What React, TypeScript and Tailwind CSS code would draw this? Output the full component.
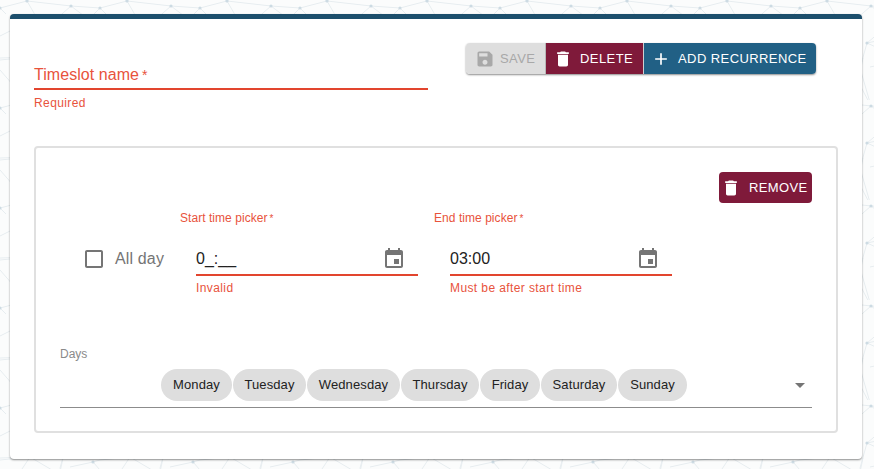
import React from 'react';

const SAVE = 'M17 3H5c-1.11 0-2 .9-2 2v14c0 1.1.89 2 2 2h14c1.1 0 2-.9 2-2V7l-4-4zm-5 16c-1.66 0-3-1.34-3-3s1.34-3 3-3 3 1.34 3 3-1.34 3-3 3zm3-10H5V5h10v4z';
const TRASH = 'M6 19c0 1.1.9 2 2 2h8c1.1 0 2-.9 2-2V7H6v12zM19 4h-3.5l-1-1h-5l-1 1H5v2h14V4z';
const PLUS = 'M19 13h-6v6h-2v-6H5v-2h6V5h2v6h6v2z';
const EVENT = 'M17 12h-5v5h5v-5zM16 1v2H8V1H6v2H5c-1.11 0-1.99.9-1.99 2L3 19c0 1.1.89 2 2 2h14c1.1 0 2-.9 2-2V5c0-1.1-.9-2-2-2h-1V1h-2zm3 18H5V8h14v11z';
const CHECK = 'M19 5v14H5V5h14m0-2H5c-1.1 0-2 .9-2 2v14c0 1.1.9 2 2 2h14c1.1 0 2-.9 2-2V5c0-1.1-.9-2-2-2z';
const ARROW = 'M7 10l5 5 5-5z';

const DAYS = [
  { name: 'Monday', w: 'w-[71px]' },
  { name: 'Tuesday', w: 'w-[73px]' },
  { name: 'Wednesday', w: 'w-[93px]' },
  { name: 'Thursday', w: 'w-[78px]' },
  { name: 'Friday', w: 'w-[60px]' },
  { name: 'Saturday', w: 'w-[76px]' },
  { name: 'Sunday', w: 'w-[69px]' },
];

const Icon = ({ d, className }: { d: string; className: string }) => (
  <svg viewBox="0 0 24 24" className={className} fill="currentColor">
    <path d={d} />
  </svg>
);

// triangle mesh behind the card, repeats every 100px
const Background = () => {
  const lines = [
    [27, 1, 71, 6], [71, 6, 100, 8], [27, 1, 0, 8], [27, 1, 38, 20], [71, 6, 55, 20], [71, 6, 92, 22],
    [27, 101, 38, 120], [0, 8, 6, 14], [100, 8, 94, 14],
    [67, 43, 92, 22], [67, 43, 100, 36], [67, 43, 100, 58], [67, 43, 60, 68],
    [0, 36, 12, 30], [0, 58, 30, 57], [30, 57, 20, 72], [30, 57, 52, 70], [63, 58, 60, 72],
    [70, 67, 93, 62], [93, 62, 100, 60], [0, 60, 30, 57], [93, 62, 100, 70], [0, 70, 27, 101], [52, 70, 71, 106],
    [60, 68, 71, 106],
  ];
  const nodes = [[27, 1], [71, 6], [100, 8], [0, 8], [67, 43], [93, 62]];
  return (
    <svg className="absolute inset-0 h-full w-full" aria-hidden="true">
      <defs>
        <pattern id="mesh" width="100" height="100" patternUnits="userSpaceOnUse">
          {lines.map(([x1, y1, x2, y2], i) => (
            <line key={i} x1={x1} y1={y1} x2={x2} y2={y2} stroke="#e7edf0" strokeWidth="1" />
          ))}
          {nodes.map(([cx, cy], i) => (
            <circle key={i} cx={cx} cy={cy} r="1.6" fill="#cddbe3" />
          ))}
        </pattern>
      </defs>
      <rect width="100%" height="100%" fill="#fbfcfc" />
      <rect width="100%" height="100%" fill="url(#mesh)" />
    </svg>
  );
};

const TimeField = ({ label, value, helper }: { label: string; value: string; helper: string }) => (
  <div className="relative w-[222px]">
    <div className="absolute left-[-16px] top-[-32px] whitespace-nowrap text-[12px] leading-[14px] tracking-[0.05px] text-[#e8533c]">
      {label}
      <span className="ml-[2px] text-[10px]">*</span>
    </div>
    <div className="flex h-[33px] items-center justify-between border-b-2 border-[#e2452e] pr-[12px] pt-[1px]">
      <span className="text-[16px] text-[#222222]">{value}</span>
      <Icon d={EVENT} className="h-6 w-6 text-[#757575]" />
    </div>
    <p className="mt-[5px] text-[12px] leading-[14px] tracking-[0.4px] text-[#e8533c]">{helper}</p>
  </div>
);

const App: React.FC = () => {
  return (
    <div className="relative h-[469px] w-[874px] overflow-hidden font-['Liberation_Sans',sans-serif]">
      <Background />
      <div className="relative pl-[10px] pt-[14px]">
        <div className="h-[445px] w-[852px] rounded-[4px] border-t-[5px] border-[#1c4f6c] bg-white pl-[24px] pr-[24px] shadow-[0_1px_2px_rgba(0,0,0,0.45)]">
          {/* name field and actions */}
          <div className="flex h-[127px] items-start">
            <div className="w-[394px] pt-[42px]">
              <div className="h-[29px] border-b-2 border-[#e2452e] text-[16px] leading-[28px] tracking-[0.05px] text-[#e8533c]">
                Timeslot name<span className="ml-[3px] text-[14px]">*</span>
              </div>
              <p className="mt-[6px] text-[12px] leading-[14px] tracking-[0.4px] text-[#e8533c]">Required</p>
            </div>
            <div className="ml-[38px] mt-[24px] flex h-[31px] rounded-[4px] text-[13px] tracking-[0.42px] shadow-[0_1px_2px_rgba(0,0,0,0.45)]">
              <button className="flex w-[80px] items-center rounded-l-[4px] border-r border-[#b8b8b8] bg-[#dedede] pl-[9px] text-[#a8a8a8]">
                <Icon d={SAVE} className="h-5 w-5" />
                <span className="ml-[5px]">SAVE</span>
              </button>
              <button className="flex w-[98px] items-center border-r border-[#cfcfcf] bg-[#7f1a3a] pl-[7px] text-white">
                <Icon d={TRASH} className="h-5 w-5" />
                <span className="ml-[7px]">DELETE</span>
              </button>
              <button className="flex w-[172px] items-center rounded-r-[4px] bg-[#216085] pl-[7px] text-white">
                <Icon d={PLUS} className="h-5 w-5" />
                <span className="ml-[7px]">ADD RECURRENCE</span>
              </button>
            </div>
          </div>

          {/* recurrence box */}
          <div className="h-[287px] w-[804px] rounded-[4px] border-2 border-[#e0e0e0] px-[24px]">
            <div className="flex justify-end pt-[24px]">
              <button className="flex h-[31px] w-[93px] items-center rounded-[4px] bg-[#7f1a3a] pl-[2px] text-[13px] tracking-[0.35px] text-white">
                <Icon d={TRASH} className="h-5 w-5" />
                <span className="ml-[8px]">REMOVE</span>
              </button>
            </div>
            <div className="mt-[40px] flex items-start">
              <div className="flex h-[32px] w-[136px] items-center pl-[22px]">
                <Icon d={CHECK} className="h-6 w-6 shrink-0 text-[#757575]" />
                <span className="ml-[9px] whitespace-nowrap text-[16px] tracking-[0.15px] text-[#757575]">All day</span>
              </div>
              <TimeField label="Start time picker" value="0_:__" helper="Invalid" />
              <div className="w-[32px]" />
              <TimeField label="End time picker" value="03:00" helper="Must be after start time" />
            </div>
            <div className="mt-[52px] text-[12px] leading-[14px] text-[#8a8a8a]">Days</div>
            <div className="mt-[8px] flex h-[39px] items-start border-b border-[#8c8c8c] pl-[101px]">
              <div className="flex gap-[1px]">
                {DAYS.map((d) => (
                  <span key={d.name} className={`flex h-[32px] ${d.w} items-center justify-center rounded-[16px] bg-[#dedede] text-[13px] tracking-[0.1px] text-[#222222]`}>
                    {d.name}
                  </span>
                ))}
              </div>
              <Icon d={ARROW} className="ml-auto mt-[4px] h-6 w-6 text-[#757575]" />
            </div>
          </div>
        </div>
      </div>
    </div>
  );
};

export default App;
